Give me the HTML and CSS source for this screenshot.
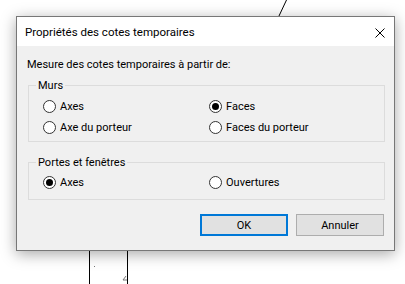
FILE: index.html
```html
<!DOCTYPE html>
<html lang="fr">
<head>
    <meta charset="UTF-8">
    <meta name="viewport" content="width=device-width, initial-scale=1.0">
    <title>Propriétés des cotes temporaires</title>
    <link rel="stylesheet" href="styles.css">
</head>
<body>
    <!-- drawing behind the dialog -->
    <svg class="drawing" width="405" height="284" viewBox="0 0 405 284">
        <line x1="286.5" y1="0" x2="278.5" y2="17" stroke="#000" stroke-width="1"/>
        <line x1="89.5" y1="240" x2="89.5" y2="284" stroke="#000" stroke-width="1"/>
        <line x1="127.5" y1="240" x2="127.5" y2="284" stroke="#000" stroke-width="1"/>
        <rect x="94" y="266" width="1" height="1" fill="#777"/>
        <path d="M126 276 L123 280 L127 280" fill="none" stroke="#777" stroke-width="1"/>
    </svg>

    <div class="window">
        <div class="titlebar">
            <span class="title">Propriétés des cotes temporaires</span>
            <button class="close" aria-label="Fermer">
                <svg width="10" height="10" viewBox="0 0 10 10">
                    <path d="M0.5 0.5 L9.5 9.5 M9.5 0.5 L0.5 9.5" stroke="#000" stroke-width="1" fill="none"/>
                </svg>
            </button>
        </div>

        <div class="content">
            <p class="intro">Mesure des cotes temporaires à partir de:</p>

            <fieldset class="group murs">
                <legend>Murs</legend>
                <div class="options">
                    <label class="radio"><span class="dot"></span>Axes</label>
                    <label class="radio checked"><span class="dot"></span>Faces</label>
                    <label class="radio"><span class="dot"></span>Axe du porteur</label>
                    <label class="radio"><span class="dot"></span>Faces du porteur</label>
                </div>
            </fieldset>

            <fieldset class="group portes">
                <legend>Portes et fenêtres</legend>
                <div class="options">
                    <label class="radio checked"><span class="dot"></span>Axes</label>
                    <label class="radio"><span class="dot"></span>Ouvertures</label>
                </div>
            </fieldset>

            <div class="actions">
                <button class="btn default">OK</button>
                <button class="btn">Annuler</button>
            </div>
        </div>
    </div>
</body>
</html>
```

FILE: styles.css
```css
body {
    margin: 0;
    background: #fff;
    font-family: Roboto, "Noto Sans", sans-serif;
    font-size: 11px;
    color: #000;
    width: 405px;
    height: 284px;
    overflow: hidden;
    position: relative;
}

.drawing {
    position: absolute;
    left: 0;
    top: 0;
}

.window {
    position: relative;
    z-index: 1;
    margin: 16px 0 0 16px;
    width: 379px;
    height: 235px;
    box-sizing: border-box;
    border: 1px solid #777;
    background: #f0f0f0;
    box-shadow: 0 3px 14px rgba(0, 0, 0, 0.35);
}

.titlebar {
    height: 29px;
    background: #fff;
    display: flex;
    align-items: center;
    justify-content: space-between;
    padding-left: 8px;
}

.title {
    font-size: 11.5px;
    line-height: 15px;
    margin-top: 2px;
}

.close {
    border: none;
    background: none;
    padding: 0;
    width: 10px;
    height: 10px;
    margin: 2px 9px 0 0;
    display: flex;
}

.content {
    padding: 11px 0 0 10px;
}

.intro {
    margin: 0 0 6px;
    line-height: 15px;
}

.group {
    margin: 0 9px 0 1px;
    padding: 0 0 3px 14px;
    border: 1px solid #dcdcdc;
    min-width: 0;
}

.group legend {
    margin-left: -7px;
    padding: 0 2px;
    line-height: 15px;
}

.options {
    display: grid;
    grid-template-columns: 166px 1fr;
    grid-auto-rows: 21px;
    padding-top: 3px;
}

.portes {
    margin-top: 13px;
    padding-bottom: 6px;
}

.portes .options {
    padding-top: 2px;
}

.radio {
    display: flex;
    align-items: center;
    gap: 4px;
    line-height: 15px;
}

.dot {
    width: 13px;
    height: 13px;
    box-sizing: border-box;
    border: 1px solid #333;
    border-radius: 50%;
    background: #fff;
    display: flex;
    align-items: center;
    justify-content: center;
}

.checked .dot::after {
    content: "";
    width: 7px;
    height: 7px;
    border-radius: 50%;
    background: #000;
}

.actions {
    display: flex;
    justify-content: flex-end;
    gap: 8px;
    margin: 14px 10px 0 0;
}

.btn {
    width: 88px;
    height: 22px;
    box-sizing: border-box;
    border: 1px solid #adadad;
    background: #e1e1e1;
    font-family: inherit;
    font-size: 11px;
    color: #000;
    padding: 0;
}

.btn.default {
    border: 2px solid #0078d7;
}
```
